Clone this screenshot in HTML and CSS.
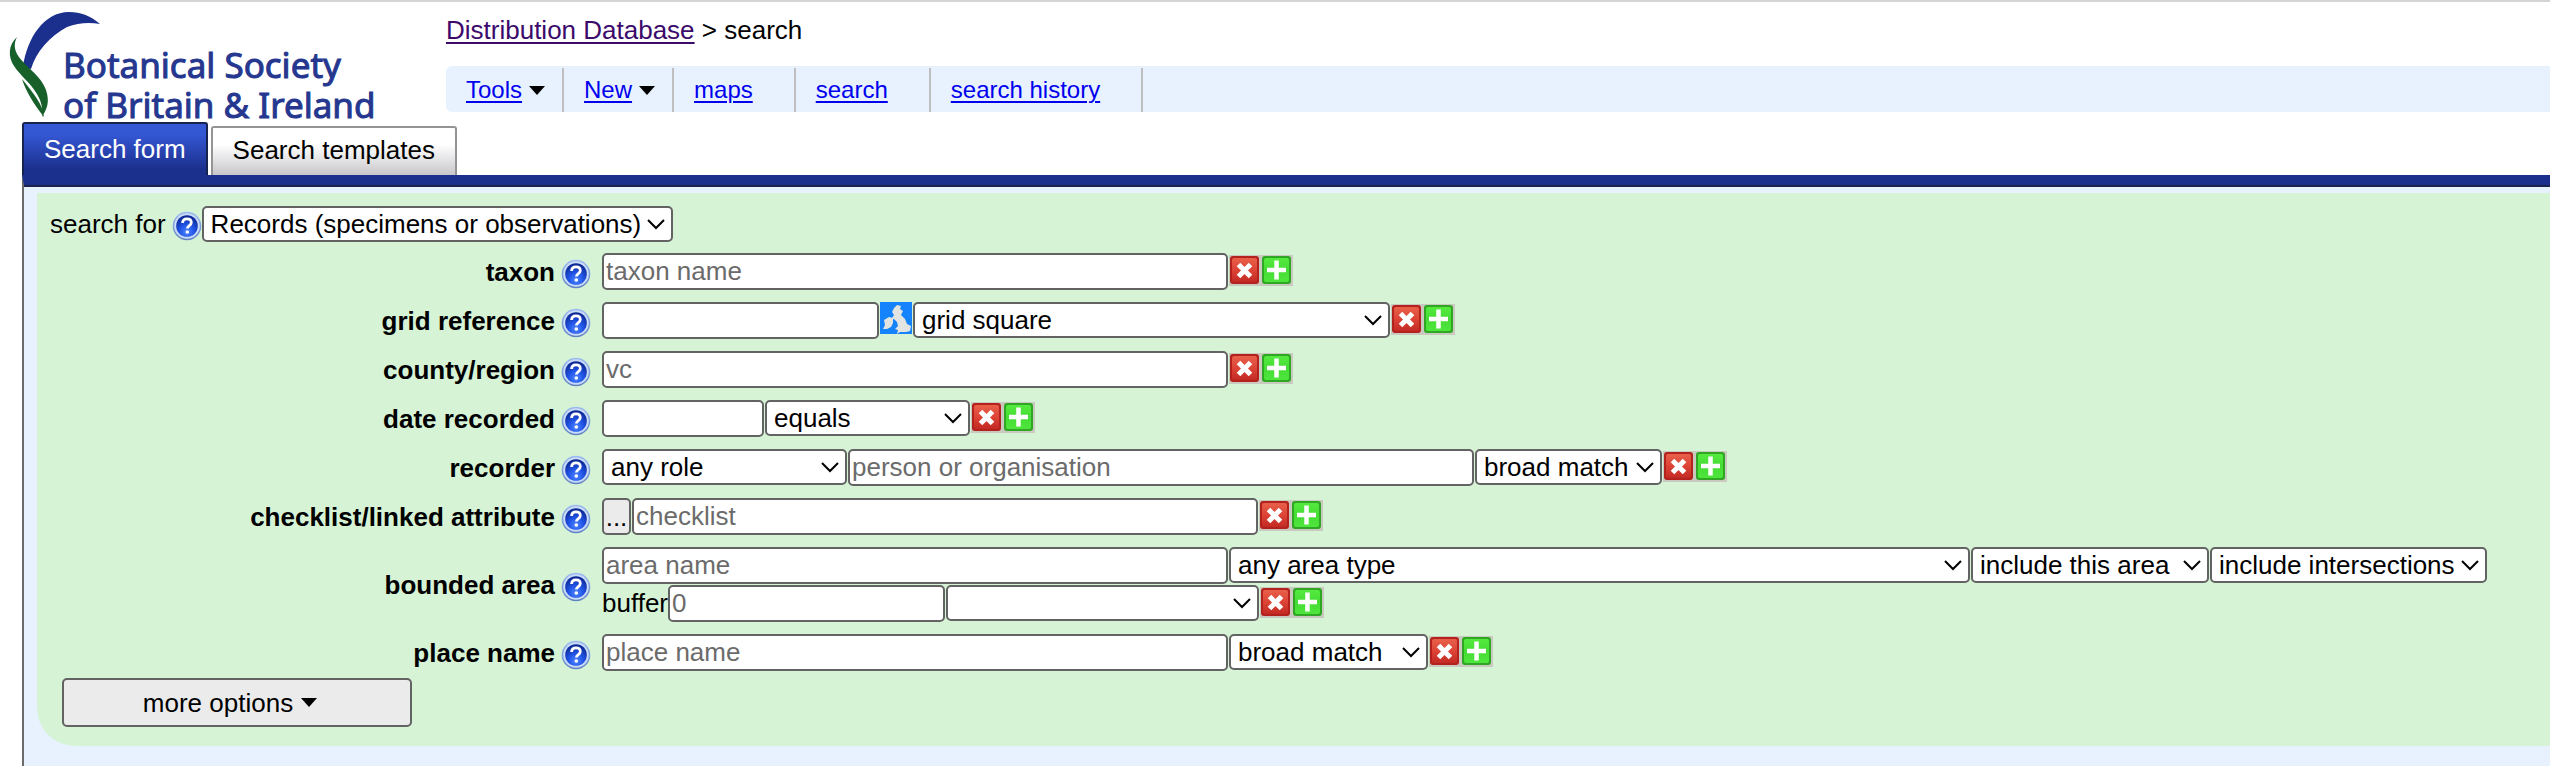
FILE: index.html
```html
<!DOCTYPE html>
<html lang="en">
<head>
<meta charset="utf-8">
<title>Distribution Database: search</title>
<link rel="stylesheet" href="styles.css">
</head>
<body>
<svg class="sprites" aria-hidden="true">
  <defs>
    <radialGradient id="ball" cx="50%" cy="78%" r="75%">
      <stop offset="0" stop-color="#4d86ff"/><stop offset=".45" stop-color="#2154e6"/><stop offset="1" stop-color="#0c2790"/>
    </radialGradient>
    <linearGradient id="rim" x1="0" y1="0" x2="0" y2="1">
      <stop offset="0" stop-color="#9dbcf0"/><stop offset="1" stop-color="#5f82c0"/>
    </linearGradient>
    <linearGradient id="red" x1="0" y1="0" x2="0" y2="1">
      <stop offset="0" stop-color="#e8604a"/><stop offset=".5" stop-color="#dd4436"/><stop offset="1" stop-color="#c22a24"/>
    </linearGradient>
    <linearGradient id="green" x1="0" y1="0" x2="0" y2="1">
      <stop offset="0" stop-color="#55ea3e"/><stop offset=".5" stop-color="#45dc35"/><stop offset="1" stop-color="#4ee63c"/>
    </linearGradient>
    <symbol id="help" viewBox="0 0 30 30">
      <circle cx="15" cy="15" r="14.300" fill="url(#rim)"/>
      <circle cx="15" cy="15" r="12.800" fill="#c9dbf8"/>
      <circle cx="15" cy="15" r="10.800" fill="url(#ball)"/>
      <path d="M10.600 12c0-2.600 1.800-4.200 4.400-4.200s4.300 1.500 4.300 3.800c0 3-3.900 3-3.900 6" fill="none" stroke="#fff" stroke-width="2.800"/>
      <circle cx="15.300" cy="21" r="1.800" fill="#fff"/>
    </symbol>
    <symbol id="remove" viewBox="0 0 32 32">
      <path d="M0 0h32v31H0z" fill="#c9c9bf"/>
      <rect x="1" y="1" width="29" height="28" rx="3" fill="#b3221d"/>
      <rect x="3" y="3" width="25" height="24" rx="2" fill="url(#red)"/>
      <path d="M9.500 9.500l12 12m0-12l-12 12" stroke="#fff" stroke-width="5"/>
    </symbol>
    <symbol id="add" viewBox="0 0 32 32">
      <path d="M0 0h32v31H0z" fill="#c9c9bf"/>
      <rect x="1" y="1" width="29" height="28" rx="3" fill="#2fa624"/>
      <rect x="3" y="3" width="25" height="24" rx="2" fill="url(#green)"/>
      <path d="M15.500 5.500v19M6 15h19" stroke="#fff" stroke-width="4.500"/>
    </symbol>
    <symbol id="isles" viewBox="0 0 32 32">
      <path d="M0 0h32v32H0z" fill="#1583fb"/>
      <path d="M14 6l3-3 4 1-1 3 3 2-2 4 4 4 2 5 4 2-1 5-4 1-6 0-3 2 1-4-3-1 3-3-1-4-2-2-3-2 2-3-2-3zM4 18l5-3 4 1 0 5-2 4-4 2-4 0 2-4z" fill="#e2e4e2"/>
    </symbol>
  </defs>
</svg>

<header class="masthead">
  <svg class="logo" viewBox="0 -8 372 120" role="img" aria-label="Botanical Society of Britain &amp; Ireland">
    <path d="M23 57C27 28 44 2 69 2c12 0 22 4 31 12Q83 11 67 17C50 26 36 42 31 59z" fill="#1b2f8c"/>
    <path d="M17 27C8 35 8 47 14 56c7 11 20 19 26 34 2 6 3 10 2 17 5-8 8-15 4-27C41 65 24 56 17 44c-3-6-3-11 0-17zM22 69c4 13 12 25 22 38-1-13-11-24-22-38z" fill="#17602a"/>
    <g fill="#25378f" stroke="#25378f" font-family="'Noto Sans', sans-serif" font-size="35">
      <text x="63" y="68">Botanical Society</text>
      <text x="63" y="108">of Britain &amp; Ireland</text>
    </g>
  </svg>
  <div class="head-main">
    <div class="crumbs"><a href="#" class="visited">Distribution Database</a> &gt; search</div>
    <nav>
      <ul class="menu">
        <li class="has-sub"><a href="#">Tools</a><span class="arrow"></span></li>
        <li class="has-sub"><a href="#">New</a><span class="arrow"></span></li>
        <li><a href="#">maps</a></li>
        <li><a href="#">search</a></li>
        <li><a href="#">search history</a></li>
      </ul>
    </nav>
  </div>
</header>

<div class="tabs">
  <button type="button" class="tab active">Search form</button>
  <button type="button" class="tab">Search templates</button>
</div>

<main class="panel">
  <form class="search">
    <div class="target">
      <label for="kind">search for</label>
      <svg class="help"><use href="#help"/></svg>
      <select id="kind" class="w-kind"><option>Records (specimens or observations)</option></select>
    </div>

    <div class="rows">
      <div class="name"><label for="taxon">taxon</label><svg class="help"><use href="#help"/></svg></div>
      <div class="fields">
        <input id="taxon" class="w-name" type="text" placeholder="taxon name">
        <span class="actions"><button type="button" aria-label="remove"><svg><use href="#remove"/></svg></button><button type="button" aria-label="add"><svg><use href="#add"/></svg></button></span>
      </div>

      <div class="name"><label for="grid">grid reference</label><svg class="help"><use href="#help"/></svg></div>
      <div class="fields">
        <input id="grid" class="w-short" type="text">
        <button type="button" class="map" aria-label="map"><svg><use href="#isles"/></svg></button>
        <select class="w-square" aria-label="grid type"><option>grid square</option></select>
        <span class="actions"><button type="button" aria-label="remove"><svg><use href="#remove"/></svg></button><button type="button" aria-label="add"><svg><use href="#add"/></svg></button></span>
      </div>

      <div class="name"><label for="county">county/region</label><svg class="help"><use href="#help"/></svg></div>
      <div class="fields">
        <input id="county" class="w-name" type="text" placeholder="vc">
        <span class="actions"><button type="button" aria-label="remove"><svg><use href="#remove"/></svg></button><button type="button" aria-label="add"><svg><use href="#add"/></svg></button></span>
      </div>

      <div class="name"><label for="date">date recorded</label><svg class="help"><use href="#help"/></svg></div>
      <div class="fields">
        <input id="date" class="w-date" type="text">
        <select class="w-equals" aria-label="date comparison"><option>equals</option></select>
        <span class="actions"><button type="button" aria-label="remove"><svg><use href="#remove"/></svg></button><button type="button" aria-label="add"><svg><use href="#add"/></svg></button></span>
      </div>

      <div class="name"><label for="recorder">recorder</label><svg class="help"><use href="#help"/></svg></div>
      <div class="fields">
        <select class="w-role" aria-label="role"><option>any role</option></select>
        <input id="recorder" class="w-name" type="text" placeholder="person or organisation">
        <select class="w-match" aria-label="match"><option>broad match</option></select>
        <span class="actions"><button type="button" aria-label="remove"><svg><use href="#remove"/></svg></button><button type="button" aria-label="add"><svg><use href="#add"/></svg></button></span>
      </div>

      <div class="name"><label for="checklist">checklist/linked attribute</label><svg class="help"><use href="#help"/></svg></div>
      <div class="fields">
        <button type="button" class="dots">...</button>
        <input id="checklist" class="w-name" type="text" placeholder="checklist">
        <span class="actions"><button type="button" aria-label="remove"><svg><use href="#remove"/></svg></button><button type="button" aria-label="add"><svg><use href="#add"/></svg></button></span>
      </div>

      <div class="name"><label for="area">bounded area</label><svg class="help"><use href="#help"/></svg></div>
      <div class="stack">
        <div class="fields">
          <input id="area" class="w-name" type="text" placeholder="area name">
          <select class="w-area" aria-label="area type"><option>any area type</option></select>
          <select class="w-include" aria-label="inclusion"><option>include this area</option></select>
          <select class="w-intersect" aria-label="intersections"><option>include intersections</option></select>
        </div>
        <div class="fields">
          <label for="buffer">buffer</label>
          <input id="buffer" class="w-short" type="text" placeholder="0">
          <select class="w-unit" aria-label="buffer unit"><option></option></select>
          <span class="actions"><button type="button" aria-label="remove"><svg><use href="#remove"/></svg></button><button type="button" aria-label="add"><svg><use href="#add"/></svg></button></span>
        </div>
      </div>

      <div class="name"><label for="place">place name</label><svg class="help"><use href="#help"/></svg></div>
      <div class="fields">
        <input id="place" class="w-name" type="text" placeholder="place name">
        <select class="w-place" aria-label="match"><option>broad match</option></select>
        <span class="actions"><button type="button" aria-label="remove"><svg><use href="#remove"/></svg></button><button type="button" aria-label="add"><svg><use href="#add"/></svg></button></span>
      </div>
    </div>

    <button type="button" class="more">more options<span class="arrow"></span></button>
  </form>
</main>
</body>
</html>
```
FILE: styles.css
```css
* { box-sizing: border-box; }

body {
  margin: 0;
  min-height: 100vh;
  display: flex;
  flex-direction: column;
  border-top: 2px solid #d4d4d4;
  background: #fff;
  color: #000;
  font: 26px/30px "Liberation Sans", Arial, sans-serif;
}

input, select, button { font: inherit; color: inherit; margin: 0; }

.sprites { position: absolute; width: 0; height: 0; }

/* header */
.masthead { display: flex; }
.logo { flex: none; width: 372px; height: 120px; margin-right: 74px; overflow: visible; }
.head-main { flex: 1; padding-top: 13px; }
.crumbs { margin-bottom: 21px; }
a { color: #0000ee; text-decoration-thickness: 2px; text-underline-offset: 3px; }
a.visited { color: #3b0a6b; }

.menu {
  display: flex;
  margin: 0;
  padding: 2px 0 0;
  list-style: none;
  font-size: 24px;
  background: #e7f2fe;
  border-radius: 6px 0 0 6px;
}
.menu li {
  display: flex;
  align-items: center;
  height: 44px;
  padding: 0 41px 0 20px;
  border-right: 2px solid #bfbfbf;
}
.menu .has-sub { padding-right: 16px; }
.arrow {
  flex: none;
  margin-left: 8px;
  border: solid transparent;
  border-width: 9px 8px 0;
  border-top-color: #000;
}
.menu .arrow { margin-left: 7px; margin-right: 1px; }

/* tabs */
.tabs { display: flex; align-items: flex-end; gap: 3px; padding-left: 22px; }
.tab {
  height: 49px;
  padding: 0 20px 3px;
  border: 2px solid #949494;
  border-bottom: 0;
  border-radius: 3px 3px 0 0;
  background: linear-gradient(#fff 35%, #c8c6ca);
}
.tab.active {
  height: 53px;
  padding-bottom: 2px;
  border-color: #16234f;
  background: linear-gradient(#3457d4 20%, #1b2f8c 90%);
  color: #fff;
}

/* form panel */
.panel {
  flex: 1;
  margin-left: 22px;
  padding: 8px 0 20px 13px;
  border-top: 10px solid #1b2f8c;
  border-left: 2px solid #6b6b6b;
  background: #e7f2fe;
  box-shadow: inset 0 2px #1b2448;
}
.search {
  padding: 13px 0 19px 13px;
  background: #d6f3d6;
  border-bottom-left-radius: 38px;
}
.help { flex: none; width: 30px; height: 30px; margin-top: 4px; }
.target { display: flex; align-items: center; height: 36px; margin-bottom: 11px; }
.target label { margin-right: 6px; }

.rows {
  display: grid;
  grid-template-columns: 541px 1fr;
  gap: 12px 11px;
  margin-bottom: 7px;
}
.name { display: flex; align-items: center; justify-content: flex-end; gap: 6px; font-weight: bold; }
.stack { display: grid; gap: 1px; }
.fields { display: flex; align-items: flex-start; gap: 1px; height: 37px; }
.fields label { line-height: 37px; margin-right: -1px; }

input, select, .dots, .more { border: 2px solid #636363; border-radius: 5px; }
input { height: 37px; padding: 0 2px; background: #fff; }
input::placeholder { color: #6b6b6b; opacity: 1; }
select {
  height: 36px;
  padding: 0 7px;
  appearance: none;
  background: #fff url("data:image/svg+xml,%3Csvg xmlns='http://www.w3.org/2000/svg' width='18' height='11'%3E%3Cpath d='M1 1l8 8 8-8' fill='none' stroke='%23000' stroke-width='2'/%3E%3C/svg%3E") no-repeat right 6px center;
}
.dots { width: 29px; height: 37px; padding: 0; background: #ebebeb; }

.w-kind { width: 471px; }
.w-name { width: 626px; }
.w-short { width: 277px; }
.w-square { width: 477px; }
.w-date { width: 162px; }
.w-equals { width: 205px; }
.w-role { width: 245px; }
.w-match { width: 187px; }
.w-area { width: 741px; }
.w-include { width: 238px; }
.w-intersect { width: 277px; }
.w-unit { width: 313px; }
.w-place { width: 199px; }

.actions { display: flex; padding-top: 2px; }
.actions button, .map { width: 32px; height: 32px; padding: 0; border: 0; background: none; }
.actions svg, .map svg { display: block; width: 32px; height: 32px; }

.more {
  display: flex;
  align-items: center;
  justify-content: center;
  width: 350px;
  height: 49px;
  margin-left: 12px;
  padding: 0 14px 0 0;
  background: #ebebeb;
}
```
